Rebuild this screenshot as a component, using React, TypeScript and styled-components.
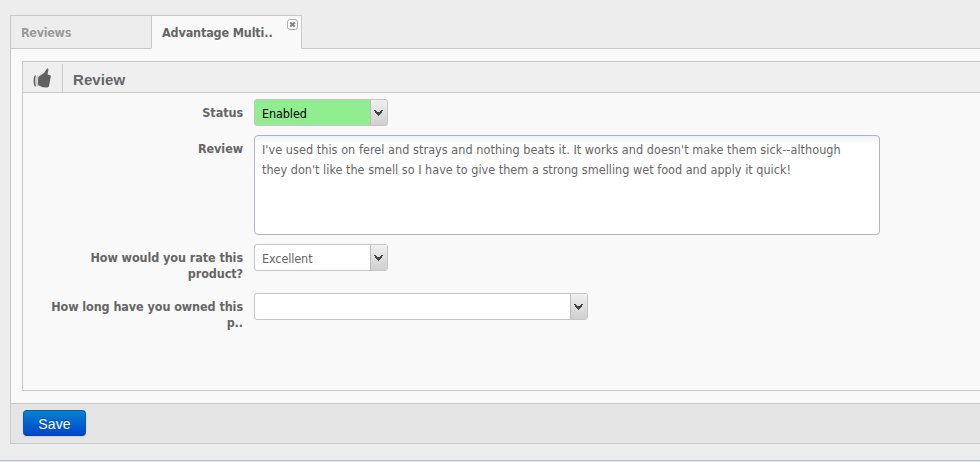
import React from "react";
import styled, { createGlobalStyle } from "styled-components";

const GlobalStyle = createGlobalStyle`
  * { box-sizing: border-box; }
  body {
    margin: 0;
    background: #ededed;
    font-family: "DejaVu Sans Condensed", "DejaVu Sans", sans-serif;
    font-stretch: condensed;
    font-size: 12.5px;
    color: #666;
    overflow: hidden;
  }
`;

const Page = styled.div`
  width: 980px;
  height: 462px;
  display: flex;
  flex-direction: column;
  padding: 15px 0 0 10px;
  overflow: hidden;
`;

const TabBar = styled.div`
  display: flex;
  height: 34px;
  flex: none;
`;

const Tab = styled.div<{ $active?: boolean }>`
  position: relative;
  width: ${(p) => (p.$active ? 151 : 141)}px;
  padding-left: ${(p) => (p.$active ? 10 : 10)}px;
  line-height: 34px;
  font-weight: bold;
  letter-spacing: ${(p) => (p.$active ? "-0.15px" : "-0.3px")};
  white-space: nowrap;
  text-shadow: 0 1px 0 #fff;
  color: ${(p) => (p.$active ? "#666" : "#999")};
  background: ${(p) => (p.$active ? "#f9f9f9" : "#ededed")};
  border: 1px solid #c9c9c9;
  border-right-width: ${(p) => (p.$active ? 1 : 0)}px;
  border-bottom-color: ${(p) => (p.$active ? "#f9f9f9" : "#c9c9c9")};
`;

const TabRule = styled.div`
  flex: 1;
  border-bottom: 1px solid #c9c9c9;
`;

const CloseButton = styled.svg`
  position: absolute;
  top: 3px;
  right: 3px;
`;

const Panel = styled.div`
  height: 395px;
  flex: none;
  display: flex;
  flex-direction: column;
  border-left: 1px solid #c9c9c9;
  border-bottom: 1px solid #c9c9c9;
  background: #f9f9f9;
`;

const Fieldset = styled.section`
  margin: 12px 0 12px 11px;
  height: 330px;
  flex: none;
  border: 1px solid #c9c9c9;
  border-right: 0;
`;

const SectionHeader = styled.header`
  display: flex;
  height: 31px;
  padding-top: 2px;
  background: #efefef;
  border-bottom: 1px solid #c9c9c9;
`;

const HeaderIcon = styled.div`
  width: 40px;
  padding: 4px 0 0 10px;
  border-right: 1px solid #c9c9c9;
`;

const SectionTitle = styled.h2`
  margin: 0;
  padding-left: 10px;
  font: bold 15px/32px "Liberation Sans", Arial, sans-serif;
  letter-spacing: 0.1px;
`;

const Form = styled.div`
  display: flex;
  flex-direction: column;
  padding-top: 6px;
`;

const FormRow = styled.div<{ $height: number }>`
  display: flex;
  gap: 11px;
  height: ${(p) => p.$height}px;
`;

const Label = styled.label`
  width: 220px;
  padding-top: 6px;
  text-align: right;
  font-weight: bold;
  line-height: 16px;
  letter-spacing: -0.08px;
`;

const SelectBox = styled.div<{ $width: number; $enabled?: boolean }>`
  display: flex;
  width: ${(p) => p.$width}px;
  height: 27px;
  border: 1px solid #c5c5c9;
  border-radius: 3px;
  overflow: hidden;
  background: ${(p) => (p.$enabled ? "#90ee90" : "#fff")};
  color: ${(p) => (p.$enabled ? "#000" : "#666")};
`;

const SelectValue = styled.span`
  flex: 1;
  padding-left: 7px;
  line-height: 28px;
  letter-spacing: -0.1px;
`;

const SelectArrow = styled.span`
  width: 17px;
  padding: 10px 0 0 3px;
  line-height: 0;
  border-left: 1px solid #bcbcbc;
  background: linear-gradient(#f0f0f0, #cfcfcf);
`;

const TextArea = styled.div`
  width: 626px;
  height: 100px;
  padding: 4px 7px;
  line-height: 20px;
  white-space: pre;
  background: linear-gradient(#eef2f2, #fff 8px);
  border: 1px solid #b2b2c5;
  border-radius: 4px;
`;

const TextLine = styled.div<{ $spacing: number }>`
  letter-spacing: ${(p) => p.$spacing}px;
`;

const Footer = styled.footer`
  flex: 1;
  padding: 6px 0 0 12px;
  border-top: 1px solid #c9c9c9;
  background: #e5e5e5;
`;

const SaveButton = styled.button`
  display: block;
  width: 63px;
  height: 26px;
  padding: 1px 0 0;
  border: 1px solid #0759ac;
  border-bottom-color: #0640a8;
  border-radius: 4px;
  background: linear-gradient(#0782cf, #0044cc);
  color: #fff;
  font: 14px/24px "Liberation Sans", Arial, sans-serif;
  letter-spacing: 0.1px;
  text-shadow: 0 -1px 0 rgba(0, 0, 0, 0.25);
  box-shadow: 0 1px 2px rgba(0, 0, 0, 0.1);
`;

const StatusEdge = styled.div`
  height: 2px;
  margin: auto 0 0 -10px;
  flex: none;
  border-top: 1px solid #b0c3d6;
  background: #dae8f5;
`;

const Chevron = () => (
  <svg width="9" height="6" viewBox="0 0 9 6" shapeRendering="crispEdges">
    <path d="M0 0h2v1h1v1h3v-1h1v-1h2v1h-1v2h-1v1h-1v1h-1v1h-1v-1h-1v-1h-1v-1h-1v-2h-1z" fill="#454545" />
  </svg>
);

const ThumbIcon = () => (
  <svg width="19" height="21" viewBox="0 0 19 21" fill="#606060">
    <path d="M5.2 9.2L7 7.4c2.4-.6 4-2 5.2-4.1L13.8.9c.6-.6 1.6-.2 1.6.8l-.9 4.9 2.6.7c.8.3.9 1.1.6 1.8l-1.6 8.4c-.2 1.2-1 2-2.2 1.9l-4-.2-3.9-1.4c-.8-.5-1.1-1.4-1.1-2.5z" />
    <path d="M2.9 7.3L1.4 7.7C.2 10.6.2 15 1.6 18.2l1.5.4C2 15 1.9 11 2.9 7.3z" />
    <path d="M4.4 7.2c-.9 3.6-.9 7.8 0 11.3" fill="none" stroke="#a8a8a8" strokeWidth=".8" />
  </svg>
);

const Select = ({ width, value, enabled }: { width: number; value?: string; enabled?: boolean }) => (
  <SelectBox $width={width} $enabled={enabled}>
    <SelectValue>{value}</SelectValue>
    <SelectArrow>
      <Chevron />
    </SelectArrow>
  </SelectBox>
);

export default function App() {
  return (
    <>
      <GlobalStyle />
      <Page>
        <TabBar>
          <Tab>Reviews</Tab>
          <Tab $active>
            Advantage Multi..
            <CloseButton width="11" height="11" viewBox="0 0 11 11">
              <rect x=".5" y=".5" width="10" height="10" rx="2.5" fill="#fafafa" stroke="#adadad" />
              <path d="M3.2 3.4l4.6 4.2M7.8 3.4L3.2 7.6" stroke="#858585" strokeWidth="2" />
            </CloseButton>
          </Tab>
          <TabRule />
        </TabBar>
        <Panel>
          <Fieldset>
            <SectionHeader>
              <HeaderIcon>
                <ThumbIcon />
              </HeaderIcon>
              <SectionTitle>Review</SectionTitle>
            </SectionHeader>
            <Form>
              <FormRow $height={36}>
                <Label>Status</Label>
                <Select width={134} value="Enabled" enabled />
              </FormRow>
              <FormRow $height={109}>
                <Label>Review</Label>
                <TextArea>
                  <TextLine $spacing={0.06}>I've used this on ferel and strays and nothing beats it. It works and doesn't make them sick--although</TextLine>
                  <TextLine $spacing={0.02}>they don't like the smell so I have to give them a strong smelling wet food and apply it quick!</TextLine>
                </TextArea>
              </FormRow>
              <FormRow $height={49}>
                <Label>How would you rate this<br />product?</Label>
                <Select width={134} value="Excellent" />
              </FormRow>
              <FormRow $height={40}>
                <Label>How long have you owned this<br />p..</Label>
                <Select width={334} />
              </FormRow>
            </Form>
          </Fieldset>
          <Footer>
            <SaveButton>Save</SaveButton>
          </Footer>
        </Panel>
        <StatusEdge />
      </Page>
    </>
  );
}
